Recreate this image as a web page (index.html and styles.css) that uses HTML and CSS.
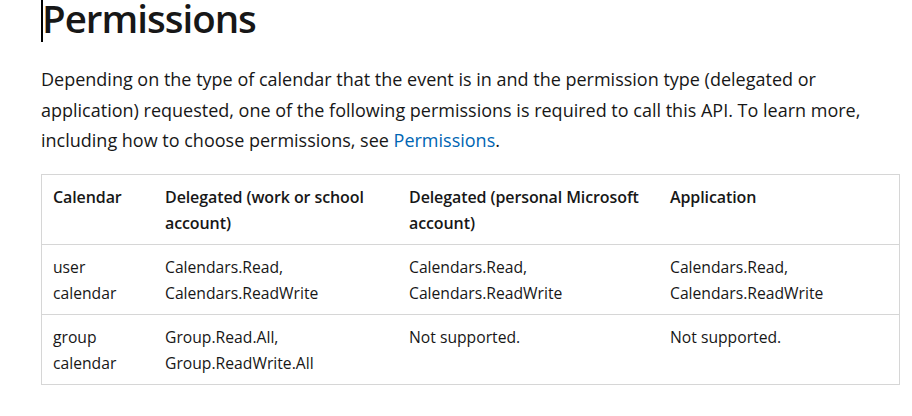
FILE: index.html
```html
<!DOCTYPE html>
<html lang="en">
<head>
<meta charset="utf-8">
<title>Permissions</title>
<link rel="stylesheet" href="styles.css">
</head>
<body>
<main class="content">
  <h2 class="heading"><span class="caret"></span>Permissions</h2>
  <p class="intro">Depending on the type of calendar that the event is in and the permission type (delegated or application) requested, one of the following permissions is required to call this API. To learn more, including how to choose permissions, see <a class="link" href="#">Permissions</a>.</p>
  <table class="perm-table">
    <thead>
      <tr>
        <th class="col-cal">Calendar</th>
        <th class="col-work">Delegated (work or school account)</th>
        <th class="col-personal">Delegated (personal Microsoft account)</th>
        <th class="col-app">Application</th>
      </tr>
    </thead>
    <tbody>
      <tr>
        <td>user calendar</td>
        <td>Calendars.Read, Calendars.ReadWrite</td>
        <td>Calendars.Read, Calendars.ReadWrite</td>
        <td>Calendars.Read, Calendars.ReadWrite</td>
      </tr>
      <tr>
        <td>group calendar</td>
        <td>Group.Read.All, Group.ReadWrite.All</td>
        <td>Not supported.</td>
        <td>Not supported.</td>
      </tr>
    </tbody>
  </table>
</main>
</body>
</html>
```
FILE: styles.css
```css
html, body {
  margin: 0;
  padding: 0;
  background: #ffffff;
}

body {
  font-family: "Open Sans", "Noto Sans", "Liberation Sans", sans-serif;
  color: #171717;
}

.content {
  padding: 0 14px 0 41px;
}

.heading {
  position: relative;
  margin: -2px 0 0 0;
  padding-left: 1px;
  font-size: 38.5px;
  line-height: 40px;
  font-weight: 600;
  letter-spacing: -1px;
}

.caret {
  position: absolute;
  left: 0;
  top: 2px;
  width: 2px;
  height: 42px;
  background: #000;
}

.intro {
  margin: 26.3px 0 0 0;
  font-size: 18px;
  line-height: 30.5px;
}

.link {
  color: #0065b3;
  text-decoration: none;
}

.perm-table {
  margin-top: 18px;
  width: 857px;
  border-collapse: collapse;
  table-layout: fixed;
  font-size: 15.7px;
  line-height: 26px;
}

.perm-table th,
.perm-table td {
  border: 1px solid #d6d6d6;
  border-left: none;
  border-right: none;
  padding: 9px 11px 8px;
  text-align: left;
  vertical-align: top;
}

.perm-table tr > :first-child {
  border-left: 1px solid #d6d6d6;
}

.perm-table tr > :last-child {
  border-right: 1px solid #d6d6d6;
}

.perm-table th {
  font-size: 16px;
  font-weight: 600;
  letter-spacing: -0.1px;
}

.col-cal { width: 90px; }
.col-work { width: 222px; }
.col-personal { width: 239px; }
.col-app { width: 218px; }
```
